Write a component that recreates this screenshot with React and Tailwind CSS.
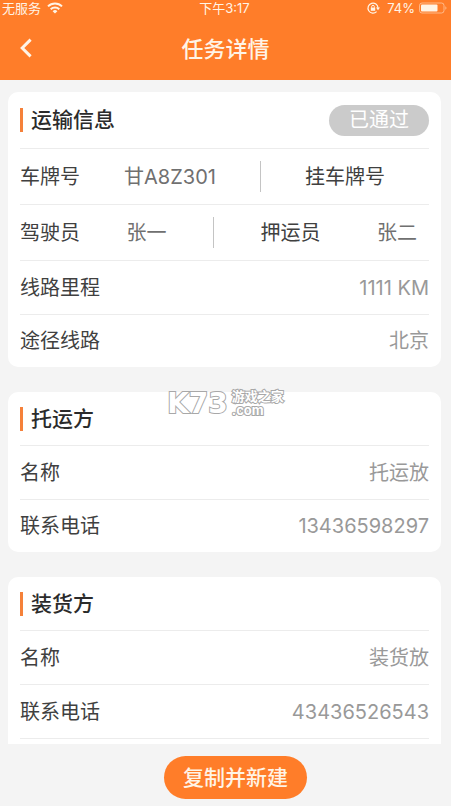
import React from "react";

function StatusBar() {
  return (
    <div className="grid h-4 grid-cols-3 items-center pr-1 pl-0.5 text-[13px] leading-4">
      <div className="flex items-center gap-1.5">
        <span>无服务</span>
        <svg className="h-3 w-4" viewBox="0 0 16 12" fill="none" stroke="currentColor" strokeWidth="2" aria-hidden="true">
          <path d="M1 4.4a10 10 0 0 1 14 0" />
          <path d="M3.7 7.2a6.2 6.2 0 0 1 8.6 0" />
          <path d="M8 11.6 5.6 9.2a3.4 3.4 0 0 1 4.8 0Z" fill="currentColor" stroke="none" />
        </svg>
      </div>
      <div className="text-center">下午3:17</div>
      <div className="flex items-center justify-end gap-1">
        <svg className="mr-1 h-3 w-3 overflow-visible" viewBox="0 0 12 12" fill="none" stroke="currentColor" aria-hidden="true">
          <path d="M9.6 9.6A5 5 0 1 1 11 6" strokeWidth="1.2" />
          <path d="M9 5.6h4L11 8.2Z" fill="currentColor" stroke="none" />
          <rect x="3.8" y="5.6" width="4.4" height="3.2" fill="currentColor" stroke="none" />
          <path d="M4.7 5.8V4.6a1.3 1.3 0 0 1 2.6 0v1.2" />
        </svg>
        <span>74%</span>
        <svg className="h-3 w-7" viewBox="0 0 28 12" fill="none" aria-hidden="true">
          <rect x="0.5" y="1" width="24.5" height="10" rx="2.5" stroke="currentColor" strokeOpacity="0.5" />
          <rect x="2" y="2.5" width="16.5" height="7" rx="1" fill="currentColor" />
          <path d="M26.3 4.2c1.6.6 1.6 3 0 3.6Z" fill="currentColor" fillOpacity="0.5" />
        </svg>
      </div>
    </div>
  );
}

function Header() {
  return (
    <header className="shrink-0 bg-[#ff7d29] text-[#fff4e6]">
      <StatusBar />
      <div className="grid h-16 grid-cols-[1fr_auto_1fr] items-center px-4">
        <button type="button" aria-label="返回" className="flex size-5 items-center justify-center">
          <svg className="h-5 w-3" viewBox="0 0 12 20" fill="none" stroke="currentColor" strokeWidth="3" aria-hidden="true">
            <path d="M10.6 1.6 2.2 10l8.4 8.4" />
          </svg>
        </button>
        <h1 className="pt-0.5 text-[22px] leading-8 font-medium">任务详情</h1>
      </div>
    </header>
  );
}

function Card({ title, badge, tall, children }) {
  return (
    <section className="divide-y divide-[#ececec] rounded-[10px] bg-white px-3">
      <div className={`flex items-center justify-between ${tall ? "h-[57px]" : "h-[54px]"}`}>
        <div className="flex items-center gap-2">
          <span className="h-6 w-[3px] bg-[#f5813a]" />
          <h2 className="text-[21px] leading-8 font-medium text-[#2b2b2b]">{title}</h2>
        </div>
        {badge && (
          <span className="flex h-[31px] items-center rounded-full bg-[#cbcbcb] px-5 text-xl text-white">{badge}</span>
        )}
      </div>
      {children}
    </section>
  );
}

function Row({ label, value }) {
  return (
    <dl className="flex h-[54px] items-center justify-between last:h-[52px]">
      <dt>{label}</dt>
      <dd className="text-[#999]">{value}</dd>
    </dl>
  );
}

function PairRow({ first, second }) {
  return (
    <dl className="flex h-14 items-center justify-between">
      <dt>{first[0]}</dt>
      <dd className="text-[#707070]">{first[1]}</dd>
      <div className="h-[31px] w-px bg-[#c4c4c4]" />
      <dt>{second[0]}</dt>
      <dd className={second[1] ? "pr-3 pl-2.5 text-[#707070]" : ""}>{second[1]}</dd>
    </dl>
  );
}

function Watermark() {
  return (
    <div className="pointer-events-none absolute inset-0 flex items-center justify-center gap-1 font-bold text-white [-webkit-text-stroke:2px_#a8a8a8] [paint-order:stroke_fill]">
      <span className="pt-0.5 font-['DejaVu_Sans'] text-[28px] leading-8">K73</span>
      <span className="flex flex-col">
        <span className="text-[13px] leading-[14px]">游戏之家</span>
        <span className="text-[13px] leading-[14px]">.com</span>
      </span>
    </div>
  );
}

export default function App() {
  return (
    <div className="relative flex h-screen flex-col bg-[#f4f4f4] font-['Inter','Noto_Sans_CJK_SC',sans-serif] text-[#404040]">
      <Header />
      <main className="flex min-h-0 flex-1 flex-col gap-[25px] overflow-hidden pt-3 pr-2.5 pl-2 text-xl leading-7">
        <Card title="运输信息" badge="已通过" tall>
          <PairRow first={["车牌号", "甘A8Z301"]} second={["挂车牌号", ""]} />
          <PairRow first={["驾驶员", "张一"]} second={["押运员", "张二"]} />
          <Row label="线路里程" value="1111 KM" />
          <Row label="途径线路" value="北京" />
        </Card>
        <Card title="托运方">
          <Row label="名称" value="托运放" />
          <Row label="联系电话" value="13436598297" />
        </Card>
        <Card title="装货方">
          <Row label="名称" value="装货放" />
          <Row label="联系电话" value="43436526543" />
          <Row label="" value="" />
        </Card>
      </main>
      <footer className="flex shrink-0 justify-center pt-3 pb-[7px] pl-5">
        <button type="button" className="h-[43px] rounded-full bg-[#ff7d29] px-[19px] text-[21px] font-medium text-[#fff4e6]">
          复制并新建
        </button>
      </footer>
      <Watermark />
    </div>
  );
}
